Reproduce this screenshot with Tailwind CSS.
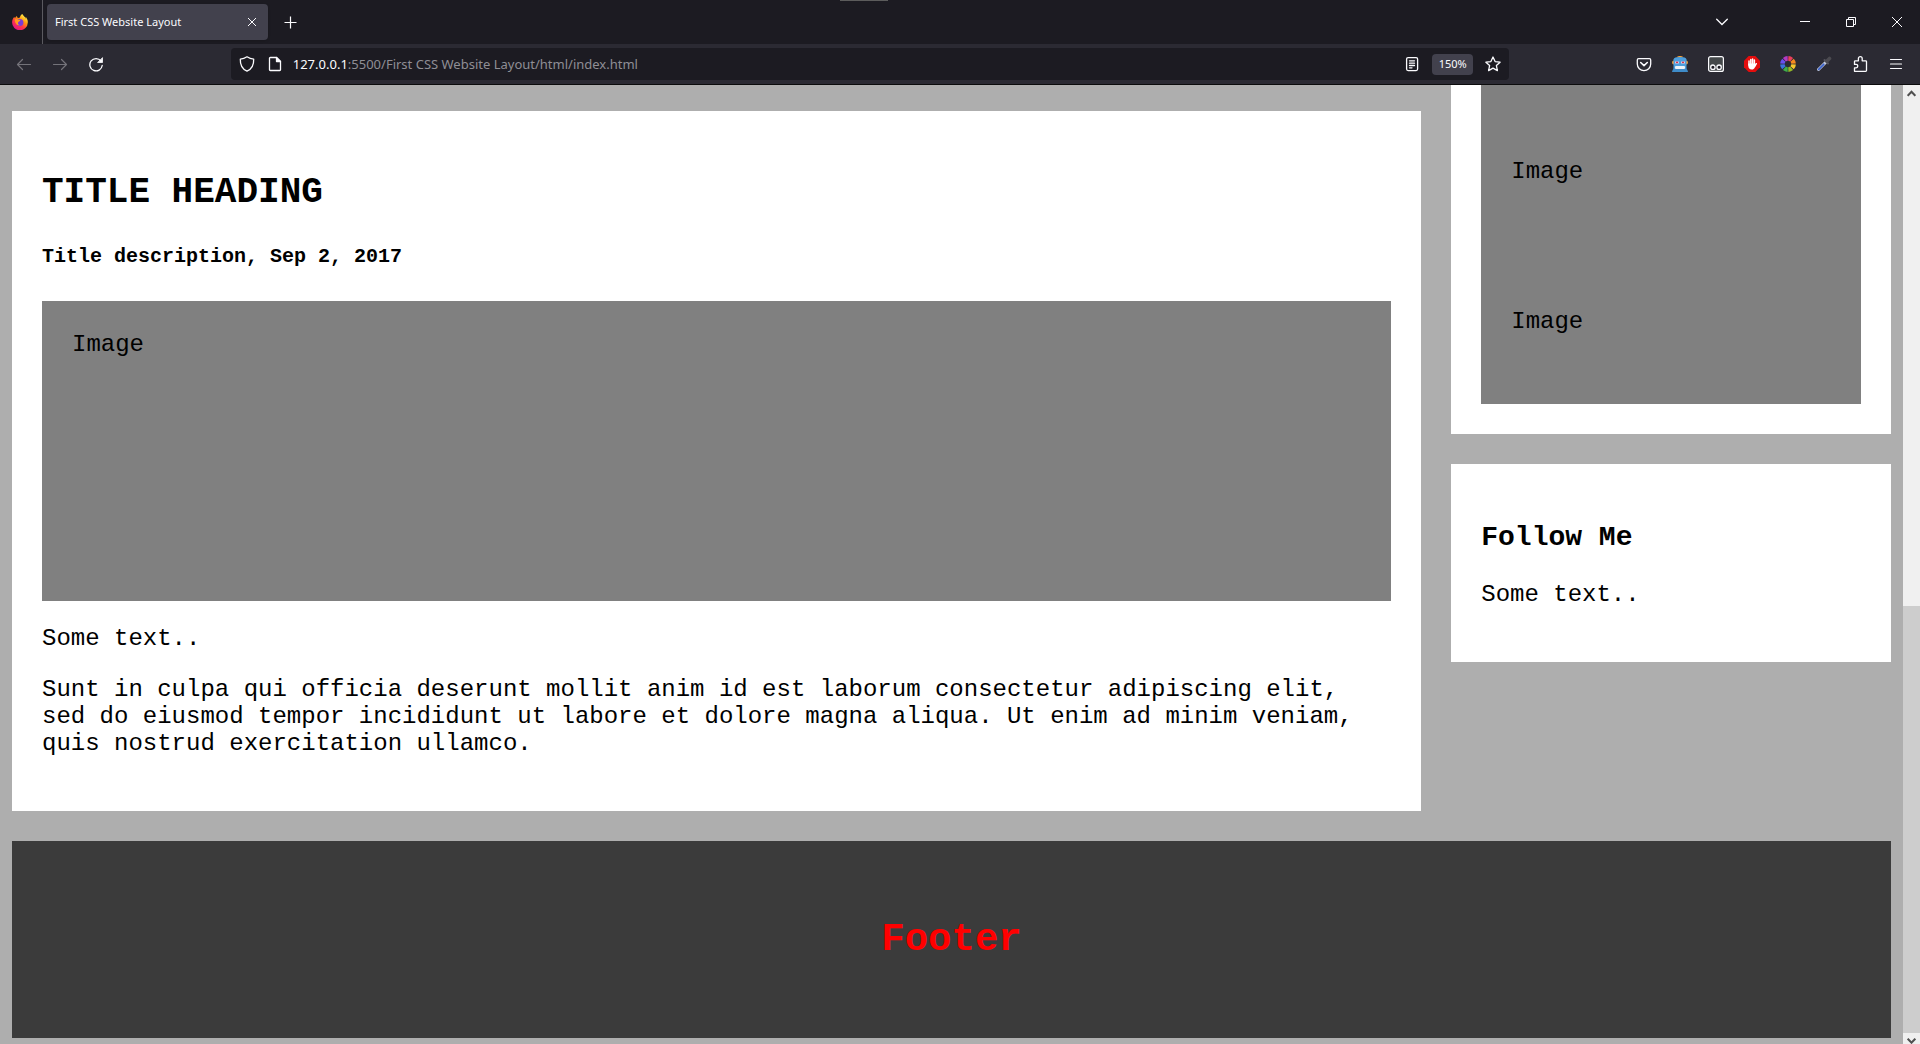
<!DOCTYPE html>
<html lang="en">
<head>
<meta charset="utf-8">
<title>First CSS Website Layout</title>
<script src="https://cdn.jsdelivr.net/npm/@tailwindcss/browser@4"></script>
</head>
<body class="flex min-h-screen flex-col bg-[#aeaeae] text-black">

<!-- Browser chrome -->
<header class="border-b border-[#0c0c0d] bg-[#2b2a33] font-['Noto_Sans',sans-serif] text-[#fbfbfe]">
  <div class="relative flex h-11 items-center bg-[#1c1b22]">
    <div class="absolute top-0 left-[840px] h-px w-12 bg-[#5c5c5c]"></div>
    <button aria-label="Firefox View" class="flex h-11 w-[43px] items-center justify-center border-r border-[#5b5a60] pr-0.5">
      <svg class="size-4" viewBox="0 0 16 16">
        <defs>
          <linearGradient id="fx" x1=".85" y1=".1" x2=".25" y2=".95"><stop offset="0" stop-color="#fff44f"/><stop offset=".35" stop-color="#ff980e"/><stop offset=".65" stop-color="#ff3647"/><stop offset="1" stop-color="#e31587"/></linearGradient>
        </defs>
        <path fill="url(#fx)" d="M15.2 5.2c-.4-.9-1.1-1.8-1.7-2.1.4.7.6 1.3.7 1.9C13.2 2.8 11.3 1.9 10.3 0 8.6 1 8 2.7 7.9 3.6c-.6 0-1.2.2-1.700.4-.8-.3-1.200-1.200-1.300-2-.7.4-1.300 1.100-1.600 1.800-.5 0-.9-.3-1.100-.9C1 4 .1 6 .1 8.300a7.800 7.800 0 0 0 15.700.2c.1-1.200-.1-2.300-.6-3.300z"/>
        <circle cx="7.900" cy="8.400" r="3.500" fill="#7a3bd8"/>
        <path fill="#ff9a1f" d="M2.800 5.400c1.500-.8 2.900-.3 3.800.4 1 .1 1.800.3 1.700.7-.1.700-1.600 1-2.100 1.800-.6 1 0 2.500 1.700 3-2.900.6-5.300-2.600-5.100-5.900z"/>
      </svg>
    </button>
    <div role="tab" aria-selected="true" class="ml-1 flex h-9 w-[221px] items-center justify-between rounded bg-[#42414d] pr-2 pl-2 shadow">
      <span class="text-[11px] leading-4 whitespace-nowrap">First CSS Website Layout</span>
      <button aria-label="Close tab" class="flex size-4 items-center justify-center">
        <svg class="size-2.5" viewBox="0 0 10 10" fill="none" stroke="currentColor"><path d="M1 1l8 8M9 1L1 9"/></svg>
      </button>
    </div>
    <button aria-label="New tab" class="ml-1 flex size-9 items-center justify-center">
      <svg class="size-[13px]" viewBox="0 0 13 13" fill="none" stroke="currentColor" stroke-width="1.200"><path d="M6.500 .5v12M.5 6.500h12"/></svg>
    </button>
    <div class="ml-auto flex h-11 items-center">
      <button aria-label="List all tabs" class="mr-[42px] flex size-9 items-center justify-center">
        <svg class="h-2 w-3" viewBox="0 0 12 8" fill="none" stroke="currentColor" stroke-width="1.300" stroke-linecap="round"><path d="M.7 1.200L6 6.500l5.300-5.300"/></svg>
      </button>
      <button aria-label="Minimize" class="flex h-11 w-[46px] items-center justify-center">
        <svg class="size-2.5" viewBox="0 0 10 10" stroke="currentColor"><path d="M0 4.500h10"/></svg>
      </button>
      <button aria-label="Restore" class="flex h-11 w-[46px] items-center justify-center">
        <svg class="size-2.5" viewBox="0 0 10 10" fill="none" stroke="currentColor"><path d="M.5 2.500h7v7h-7zM2.500 2.500v-2h7v7h-2"/></svg>
      </button>
      <button aria-label="Close" class="flex h-11 w-[46px] items-center justify-center">
        <svg class="size-2.5" viewBox="0 0 10 10" stroke="currentColor"><path d="M0 0l10 10M10 0L0 10"/></svg>
      </button>
    </div>
  </div>

  <div class="flex h-10 items-center pr-1.5 pl-1.5">
    <button aria-label="Back" disabled class="flex size-9 items-center justify-center text-[#74737a]">
      <svg class="size-4" viewBox="0 0 16 16" fill="none" stroke="currentColor" stroke-width="1.200" stroke-linecap="round" stroke-linejoin="round"><path d="M14.500 8.500h-13M6.500 3.500l-5 5 5 5"/></svg>
    </button>
    <button aria-label="Forward" disabled class="flex size-9 items-center justify-center text-[#74737a]">
      <svg class="size-4" viewBox="0 0 16 16" fill="none" stroke="currentColor" stroke-width="1.200" stroke-linecap="round" stroke-linejoin="round"><path d="M1.500 8.500h13M9.500 3.500l5 5-5 5"/></svg>
    </button>
    <button aria-label="Reload" class="flex size-9 items-center justify-center">
      <svg class="size-4" viewBox="0 0 16 16" fill="none" stroke="currentColor" stroke-width="1.300" stroke-linecap="round"><path d="M13 5A6.200 6.200 0 1 0 14.200 9.500"/><path d="M14.500 2v4.500H10z" fill="currentColor" stroke-width=".8" stroke-linejoin="round"/></svg>
    </button>
    <div class="flex-[118]"></div>
    <div class="flex h-8 flex-[1276] items-center rounded bg-[#1c1b22] pr-2 pl-2">
      <svg class="size-4" viewBox="0 0 16 16" fill="none" stroke="currentColor" stroke-width="1.300" stroke-linejoin="round"><path d="M8 .8c2 1.400 4.300 2.200 6.700 2.300C14.900 8.500 12.500 13.400 8 15.200 3.500 13.400 1.100 8.500 1.300 3.100 3.700 3 6 2.200 8 .8z"/></svg>
      <svg class="ml-3 size-4" viewBox="0 0 16 16" fill="none" stroke="currentColor" stroke-width="1.300" stroke-linejoin="round"><path d="M9.500 1.500H3.300c-.4 0-.8.4-.8.8v11.400c0 .4.400.8.800.8h9.400c.4 0 .8-.4.8-.8V5.500z"/><path d="M9.500 1.500v4h4z" fill="currentColor"/></svg>
      <label for="url" class="ml-2.5 text-[13px] leading-5">127.0.0.1</label>
      <input id="url" type="text" value=":5500/First CSS Website Layout/html/index.html" class="min-w-0 flex-1 bg-transparent text-[13px] leading-5 text-[#8f8e95] outline-none">
      <button aria-label="Reader view" class="mr-3 flex size-4 items-center justify-center">
        <svg class="size-4" viewBox="0 0 16 16" fill="none" stroke="currentColor" stroke-width="1.300" stroke-linecap="round"><rect x="2.600" y="1.600" width="11" height="13" rx="1.500"/><path d="M5.500 4.800h5M5.500 7.200h5M5.500 9.500h5M5.500 11.800h2.500"/></svg>
      </button>
      <button class="h-[21px] w-[41px] rounded-sm bg-[#42414d] text-[11px] leading-5">150%</button>
      <button aria-label="Bookmark" class="ml-3 flex size-4 items-center justify-center">
        <svg class="size-4" viewBox="0 0 16 16" fill="none" stroke="currentColor" stroke-width="1.300" stroke-linejoin="round"><path d="M8 1l2.100 4.600 5 .6-3.700 3.400 1 5L8 12.100l-4.400 2.500 1-5L.9 6.200l5-.6z"/></svg>
      </button>
    </div>
    <div class="flex-[118]"></div>
    <button aria-label="Save to Pocket" class="flex size-9 items-center justify-center">
      <svg class="size-4" viewBox="0 0 16 16" fill="none" stroke="currentColor" stroke-width="1.300" stroke-linecap="round" stroke-linejoin="round"><path d="M2.600 2.700h10.800c.7 0 1.300.5 1.300 1.200V8a6.700 6.700 0 0 1-13.400 0V3.900c0-.7.600-1.200 1.300-1.200z"/><path d="M4.700 6.500L8 9.600l3.300-3.100" stroke-width="1.600"/></svg>
    </button>
    <button aria-label="Robot extension" class="flex size-9 items-center justify-center">
      <svg class="size-4" viewBox="0 0 16 16"><circle cx="2" cy="6.500" r="2" fill="#f2a03c"/><circle cx="14" cy="6.500" r="2" fill="#f2a03c"/><path d="M4.500 1.500C5 .5 6.500 0 8 0s3 .5 3.500 1.500z" fill="#f2a03c"/><path d="M1.500 3.500C2 1.500 4 .9 8 .9s6 .6 6.500 2.600v9.500h-13z" fill="#4c9fdf"/><path d="M0 16c.3-1.600.8-2.600 1.700-3.500h12.600c.9.900 1.400 1.900 1.700 3.500z" fill="#3f8cc9"/><path d="M3 5.500h4v2H3zM9 5.500h4v2H9z" fill="#e8c6d6"/><path d="M4 5.800h2v1.300H4zM10 5.800h2v1.300h-2z" fill="#d9344a"/><rect x="3" y="10" width="10" height="3" rx="1" fill="#eef3f8"/></svg>
    </button>
    <button aria-label="Tampermonkey" class="flex size-9 items-center justify-center">
      <svg class="size-4" viewBox="0 0 16 16" fill="none" stroke="#fbfbfe"><rect x=".6" y=".6" width="14.800" height="14.800" rx="2" fill="#44484a" stroke-width="1.200"/><circle cx="4.900" cy="11.200" r="2.200" fill="#1c1b22" stroke-width="1.300"/><circle cx="11.100" cy="11.200" r="2.200" fill="#1c1b22" stroke-width="1.300"/></svg>
    </button>
    <button aria-label="Ad blocker" class="flex size-9 items-center justify-center">
      <svg class="size-4" viewBox="0 0 16 16"><path d="M4.700 0h6.600L16 4.700v6.600L11.300 16H4.700L0 11.300V4.700z" fill="#e40d0d"/><g stroke="#fff" stroke-width="1.500" stroke-linecap="round"><path d="M5 5v4M6.800 3.500v5M8.600 2.900v5M10.400 3.900v5M12.300 7.700l-1.700 3"/></g><path fill="#fff" d="M4.250 7.500h6.900v2.500l-.5 1.700c-.5 1.200-1.400 1.800-2.800 1.800-2.300 0-3.600-1.500-3.600-3.700z"/></svg>
    </button>
    <button aria-label="Color picker" class="flex size-9 items-center justify-center">
      <svg class="size-4" viewBox="-8 -8 16 16" fill="none" stroke-width="4.600">
        <path stroke="#e9405a" d="M.3-5.600A5.600 5.600 0 0 1 3.600-4.300"/>
        <path stroke="#f58a1f" d="M4.100-3.800A5.600 5.600 0 0 1 5.600-.3"/>
        <path stroke="#f6c62c" d="M5.600.3A5.600 5.600 0 0 1 4.100 3.800"/>
        <path stroke="#93b827" d="M3.600 4.300A5.600 5.600 0 0 1 .3 5.600"/>
        <path stroke="#3fae49" d="M-.3 5.600A5.600 5.600 0 0 1-3.600 4.300"/>
        <path stroke="#3b73dc" d="M-4.100 3.800A5.600 5.600 0 0 1-5.600.3"/>
        <path stroke="#6a4ff0" d="M-5.600-.3A5.600 5.600 0 0 1-4.100-3.800"/>
        <path stroke="#b43ac4" d="M-3.600-4.300A5.600 5.600 0 0 1-.3-5.600"/>
      </svg>
    </button>
    <button aria-label="Eyedropper" class="flex size-9 items-center justify-center">
      <svg class="size-4" viewBox="0 0 16 16" stroke-linecap="round"><path d="M2.500 13.500l7-7" stroke="#c3cadb" stroke-width="3"/><path d="M2.700 13.300l5-5" stroke="#3c62c9" stroke-width="1.800"/><path d="M8.500 4l3.500 3.500" stroke="#55545c" stroke-width="2"/><path d="M11 5l2.500-2.500" stroke="#4b4a50" stroke-width="3.600"/></svg>
    </button>
    <button aria-label="Extensions" class="flex size-9 items-center justify-center">
      <svg class="size-4" viewBox="0 0 16 16" fill="none" stroke="currentColor" stroke-width="1.300" stroke-linejoin="round"><path d="M2.500 15.300V11.800h1.600a1.700 1.700 0 0 0 0-3.400H2.500V5.600c0-.5.300-.8.800-.8h3.100V2.600a1.900 1.900 0 0 1 3.800 0v2.200h3.500c.5 0 .8.3.8.8v8.900c0 .5-.3.800-.8.800z"/></svg>
    </button>
    <button aria-label="Menu" class="flex size-9 items-center justify-center">
      <svg class="size-4" viewBox="0 0 16 16" stroke="currentColor" stroke-width="1.200" stroke-linecap="round"><path d="M2.500 3.500h11M2.500 8h11M2.500 12.500h11"/></svg>
    </button>
  </div>
</header>

<!-- Page viewport -->
<div class="flex flex-1">
  <div class="min-w-0 flex-1 px-3 pb-1.5 font-['Liberation_Mono',monospace] text-[24px] leading-[27px]">
    <div class="flex items-start">
      <main class="w-3/4 pt-[26px]">
        <article class="bg-white px-[30px] pt-[61px] pb-[54px]">
          <h2 class="text-[36px] leading-[41px] font-bold">TITLE HEADING</h2>
          <h5 class="mt-8 text-[20px] leading-[23px] font-bold">Title description, Sep 2, 2017</h5>
          <div class="mt-[33px] h-[300px] bg-[#808080] p-[30px]">Image</div>
          <p class="mt-6">Some text..</p>
          <p class="mt-6">Sunt in culpa qui officia deserunt mollit anim id est laborum consectetur adipiscing elit, sed do eiusmod tempor incididunt ut labore et dolore magna aliqua. Ut enim ad minim veniam, quis nostrud exercitation ullamco.</p>
        </article>
      </main>
      <aside class="w-1/4 pl-[30px]">
        <section class="bg-white px-[30px] pb-[30px]">
          <div class="h-[193px] bg-[#808080] px-[30px] pt-[73px]">Image</div>
          <div class="h-[126px] bg-[#808080] px-[30px] pt-[30px]">Image</div>
        </section>
        <section class="mt-[30px] bg-white px-[30px] pt-[58px] pb-[54px]">
          <h3 class="text-[28px] leading-[31px] font-bold">Follow Me</h3>
          <p class="mt-7">Some text..</p>
        </section>
      </aside>
    </div>
    <footer class="mt-[30px] bg-[#3b3b3b] pt-[78px] pb-[76px] text-center">
      <h2 class="text-[39px] leading-[43px] font-bold text-[#ff0000]">Footer</h2>
    </footer>
  </div>

  <!-- Scrollbar -->
  <div class="flex w-[17px] flex-col bg-[#f0f0f0] text-[#505050]">
    <div class="flex h-[17px] items-center justify-center">
      <svg class="h-[7px] w-[9px]" viewBox="0 0 9 7" fill="none" stroke="currentColor" stroke-width="2"><path d="M.7 5.800l3.800-4 3.800 4"/></svg>
    </div>
    <div class="flex-[504]"></div>
    <div class="flex-[427] bg-[#cdcdcd]"></div>
    <div class="flex h-[11px] items-end justify-center overflow-hidden">
      <svg class="h-[6px] w-[9px]" viewBox="0 0 9 6" fill="none" stroke="currentColor" stroke-width="2"><path d="M.7.7l3.800 4 3.800-4"/></svg>
    </div>
  </div>
</div>
</body>
</html>
